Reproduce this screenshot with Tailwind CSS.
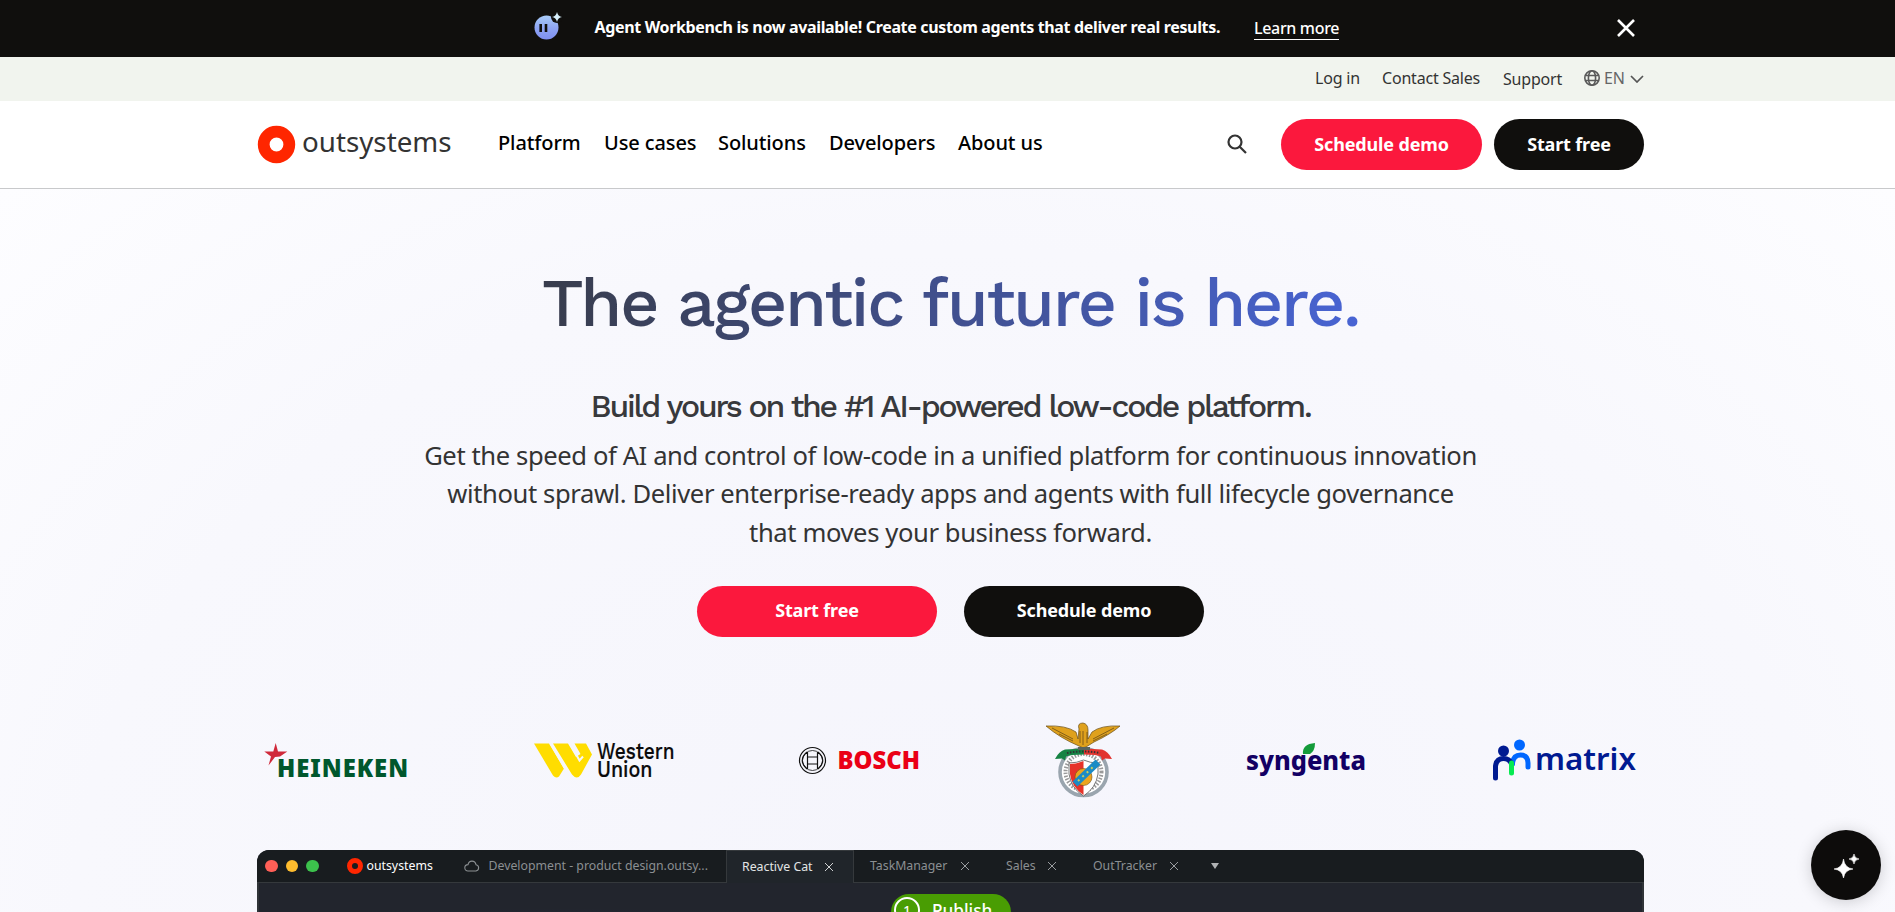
<!DOCTYPE html>
<html lang="en">
<head>
<meta charset="utf-8">
<title>OutSystems</title>
<script src="https://cdn.jsdelivr.net/npm/@tailwindcss/browser@4"></script>
</head>
<body class="h-[912px] overflow-hidden bg-[#f6f6fc] font-['Noto_Sans',sans-serif] text-[#101010]">
<div class="relative h-[912px] overflow-hidden">
  <!-- announcement -->
  <div class="flex h-[57px] items-center bg-[#100f0d] pb-[3px] pl-[533px] text-white">
    <svg class="h-8 w-8 shrink-0" viewBox="0 0 32 32"><defs><linearGradient id="bot" x1="0" y1="0" x2="0" y2="1"><stop offset="0" stop-color="#a9cdf8"/><stop offset=".5" stop-color="#8fa6f4"/><stop offset="1" stop-color="#7f8ff0"/></linearGradient></defs><circle cx="13.500" cy="16.500" r="12" fill="url(#bot)"/><circle cx="24" cy="6" r="6" fill="#100f0d"/><path d="M24 1Q25 5.300 29 6Q25 6.700 24 11Q23 6.700 19 6Q23 5.300 24 1Z" fill="#d7f0fb"/><path d="M7.700 13v8M13 13v8" stroke="#100f0d" stroke-width="2.600"/></svg>
    <p class="ml-[29.500px] w-[626.500px] whitespace-nowrap text-[16px] font-bold leading-6 tracking-[-0.34px]">Agent Workbench is now available! Create custom agents that deliver real results.</p>
    <a class="ml-[33px] mt-[2px] w-[85px] whitespace-nowrap border-b border-white text-[16px] font-medium leading-[22px] tracking-[-0.33px]">Learn more</a>
    <svg class="ml-[278px] mt-px h-[18px] w-[18px]" viewBox="0 0 18 18" fill="none" stroke="#fff" stroke-width="2.600"><path d="M1 1l16 16M17 1L1 17"/></svg>
  </div>
  <!-- utility links -->
  <div class="flex h-11 items-center bg-[#f1f4ee] pb-[2px] pl-[1315px] text-[16px] leading-5 tracking-[-0.2px] text-[#333]">
    <a class="w-[67px]">Log in</a><a class="w-[121px]">Contact Sales</a><a class="w-[81px] pt-px">Support</a>
    <svg class="h-4 w-4" viewBox="0 0 16 16" fill="none" stroke="#5a5a5a" stroke-width="1.600"><circle cx="8" cy="8" r="7.200"/><ellipse cx="8" cy="8" rx="3.600" ry="7.200"/><path d="M1.500 5.500h13M1.500 10.500h13"/></svg>
    <span class="ml-1 w-[22px] text-[#666]">EN</span>
    <svg class="ml-1 mt-[2px] h-2 w-[14px]" viewBox="0 0 14 8" fill="none" stroke="#555" stroke-width="1.700"><path d="M1 1l6 6 6-6"/></svg>
  </div>
  <!-- main navigation -->
  <header class="flex h-[88px] items-center border-b border-[#c8c9cb] bg-white pl-[257px]">
    <svg class="h-[50px] w-[197px]" viewBox="0 0 197 50"><circle cx="19.500" cy="24.500" r="12.800" fill="none" stroke="#ff2600" stroke-width="11.800"/><text x="45" y="32.300" textLength="149.500" lengthAdjust="spacingAndGlyphs" font-family="Noto Sans, sans-serif" font-size="28" fill="#333">outsystems</text></svg>
    <nav class="mb-[3px] ml-11 flex whitespace-nowrap text-[20px] font-medium leading-7 tracking-[-0.1px] text-black"><a class="w-[106px]">Platform</a><a class="w-[114px]">Use cases</a><a class="w-[111px]">Solutions</a><a class="w-[129px]">Developers</a><a class="w-[90px]">About us</a></nav>
    <svg class="-mt-[2px] ml-[179px] h-5 w-5" viewBox="0 0 20 20" fill="none" stroke="#333" stroke-width="2.200"><circle cx="8" cy="8" r="6.500"/><path d="M12.700 12.700L19 19"/></svg>
    <a class="ml-[34px] flex h-[51px] w-[201px] items-center justify-center rounded-full bg-[#fb183d] text-[18px] font-bold tracking-[-0.15px] text-white">Schedule demo</a>
    <a class="ml-3 flex h-[51px] w-[150px] items-center justify-center rounded-full bg-[#100f0d] text-[18px] font-bold tracking-[-0.15px] text-white">Start free</a>
  </header>
  <!-- hero -->
  <main class="flex h-[723px] flex-col items-center bg-[radial-gradient(ellipse_at_50%_100%,#f5f5fc_0%,#f8f8fd_65%,#fdfdff_100%)] pl-[6px] pt-[74px]">
    <h1 class="w-[820px] whitespace-nowrap bg-linear-to-r from-[#383c4c] via-[#41508f] to-[#4864d4] bg-clip-text text-center font-['Work_Sans',Inter,sans-serif] text-[68px] font-medium leading-[80px] tracking-[-2.300px] text-transparent">The agentic future is here.</h1>
    <h2 class="mt-[43px] whitespace-nowrap font-['Work_Sans',Inter,sans-serif] text-[32px] font-medium leading-10 tracking-[-2.280px] text-[#38393c]">Build yours on the #1 AI-powered low-code platform.</h2>
    <p class="mt-[11px] whitespace-nowrap text-center text-[25.600px] leading-[38.400px] tracking-[-0.4px] text-[#333]">Get the speed of AI and control of low-code in a unified platform for continuous innovation<br>without sprawl. Deliver enterprise-ready apps and agents with full lifecycle governance<br>that moves your business forward.</p>
    <div class="mt-[34px] flex gap-[27px] text-[18px] font-bold tracking-[-0.15px] text-white">
      <a class="flex h-[51px] w-[240px] items-center justify-center rounded-full bg-[#fb183d] pb-[2px]">Start free</a>
      <a class="flex h-[51px] w-[240px] items-center justify-center rounded-full bg-[#100f0d] pb-[2px]">Schedule demo</a>
    </div>
    <!-- customers -->
    <div class="mt-[83px] flex h-20 w-[1387px] shrink-0">
      <svg class="h-20 w-[160px]" viewBox="257 720 160 80"><path d="M275.700 743L278 751.500H287.300L280 756.500L275 757L268.500 765.500L271 756.500L264.300 751.500H273.300Z" fill="#d0293a"/><text x="277" y="777" textLength="132" lengthAdjust="spacingAndGlyphs" letter-spacing="1" font-family="Noto Sans, sans-serif" font-weight="900" font-size="25" fill="#00572d">HEINEKEN</text></svg>
      <svg class="ml-[107px] h-20 w-[160px]" viewBox="524 720 160 80"><path d="M534 743.500h15l15 25-5 8q-3 2.500-6-1z" fill="#ffdd00"/><path d="M553 743.500h15l8 13.500 4.500-3-6-10.500h11.500l6 11-11 20q-4 6-9 0z" fill="#ffdd00"/><path d="M550.500 743.500l15 26M570 743.500l9.500 17 3.500-4" fill="none" stroke="#f6f6fc" stroke-width="2"/><g font-family="Work Sans, Inter, sans-serif" font-weight="500" font-size="22.500" fill="#0a0a0a" stroke="#0a0a0a" stroke-width=".2"><text x="597" y="759" textLength="77.500" lengthAdjust="spacingAndGlyphs">Western</text><text x="597" y="777" textLength="55.500" lengthAdjust="spacingAndGlyphs">Union</text></g></svg>
      <svg class="ml-24 h-20 w-[160px]" viewBox="780 720 160 80"><g fill="none" stroke="#111" stroke-width="1.200"><circle cx="812.500" cy="760.500" r="13"/><path d="M807.500 752v17M817.500 752v17M807.500 757h10M807.500 764h10M807 752q-9.500 8.500 0 17M818 752q9.500 8.500 0 17"/></g><circle cx="812.500" cy="760.500" r="10" fill="none" stroke="#111" stroke-width=".8"/><text x="837.500" y="769" textLength="82.500" lengthAdjust="spacingAndGlyphs" font-family="Noto Sans, sans-serif" font-weight="900" font-size="25" fill="#ea0016">BOSCH</text></svg>
      <svg class="ml-[88px] h-20 w-[110px]" viewBox="1028 720 110 80"><circle cx="1083.500" cy="772" r="23.500" fill="#fff" stroke="#9aa5ae" stroke-width="3.600"/><circle cx="1083.500" cy="772" r="18" fill="none" stroke="#999" stroke-width="4" stroke-dasharray="1.500 1.500"/><path d="M1055 759q4-8 10-9.500l19-1v6q-14 0-18 2l-1 4-3-2z" fill="#168344"/><path d="M1112 759q-4-8-10-9.500l-18-1v6q13 0 17 2l1 4 3-2z" fill="#e2342f"/><path d="M1067 753q16-3 33 0" fill="none" stroke="#333" stroke-width="2" stroke-dasharray="1.500 1.500"/><path d="M1069 763q8 0 14.500-3q6.500 3 14.500 3v11q-2 14-14.500 22q-12.500-8-14.500-22z" fill="#fff" stroke="#555" stroke-width=".8"/><path d="M1070 764q7 0 13.500-3v34q-12-8-13.500-21z" fill="#e63329"/><circle cx="1083.500" cy="777" r="8.500" fill="#eba51f" stroke="#70501b" stroke-width=".6"/><path d="M1075 784l23-22" stroke="#1b8bc5" stroke-width="7"/><path d="M1078 781l17-16" stroke="#c9cf5d" stroke-width="2" stroke-dasharray="2 4"/><path d="M1046 726q20-1 30 6l2 7 1-10q-2-6 4-6 5 1 5 7l0 9 4-7q9-7 28-6-9 8-26 16l-8 5q-3 2-7-1-19-8-33-20z" fill="#dfa11d" stroke="#694d17" stroke-width=".7"/><path d="M1052 728l21 11M1059 734l14 7M1114 728l-21 11M1107 734l-14 7M1080 731v12M1083 731v14M1087 732v11" stroke="#694d17" stroke-width=".8"/><path d="M1078 747h12v3h-12z" fill="#59645d"/></svg>
      <svg class="ml-[98px] h-20 w-[140px]" viewBox="1236 720 140 80"><text x="1246" y="770" textLength="120" lengthAdjust="spacingAndGlyphs" font-family="Noto Sans, sans-serif" font-weight="800" font-size="27" fill="#130064">syngenta</text><path d="M1303 754q-1-10 12-11 0 8-5 11z" fill="#149b3a"/></svg>
      <svg class="ml-[108px] h-20 w-[160px]" viewBox="1484 720 160 80"><g fill="none" stroke-width="5" stroke-linecap="round"><path d="M1512.500 764v-1q1-8 8-8 7.500 0 7.500 8v4" stroke="#0067ff"/><path d="M1495.500 778v-12q1-7.500 8-7.500 6 0 8 5.500" stroke="#001a91"/><path d="M1511.500 763v10" stroke="#06ea51"/></g><circle cx="1503.500" cy="751" r="5.500" fill="#001a91"/><circle cx="1519.500" cy="745" r="5.500" fill="#0067ff"/><text x="1535" y="770" textLength="101" lengthAdjust="spacingAndGlyphs" font-family="Noto Sans, sans-serif" font-weight="600" font-size="31" fill="#001a91">matrix</text></svg>
    </div>
    <!-- IDE preview -->
    <section class="mt-[50px] h-[62px] w-[1387px] shrink-0 overflow-hidden rounded-t-[12px] bg-[#22252d] text-[12.300px] text-[#8b8f92]">
      <div class="flex h-[33px] items-stretch bg-[#181c1f] leading-[30px]">
        <div class="flex w-[469px] shrink-0 items-center border-b border-[#35393c] pl-2">
          <div class="flex gap-2"><i class="h-[12.500px] w-[12.500px] rounded-full bg-[#ff5f57]"></i><i class="h-[12.500px] w-[12.500px] rounded-full bg-[#febc2e]"></i><i class="h-[12.500px] w-[12.500px] rounded-full bg-[#3cc14c]"></i></div>
          <svg class="ml-[28px] h-4 w-4" viewBox="0 0 16 16"><circle cx="8" cy="8" r="5.500" fill="none" stroke="#ff2600" stroke-width="5"/></svg>
          <span class="ml-[4px] w-[65px] pb-px text-white">outsystems</span>
          <svg class="ml-[32px] h-3 w-4" viewBox="0 0 16 12" fill="none" stroke="#8b8f92" stroke-width="1.100"><path d="M4 11a3.200 3.200 0 0 1 0-6.400C5 0 11 0 12 4.700A3.200 3.200 0 0 1 12 11z"/></svg>
          <span class="ml-[9px] whitespace-nowrap">Development - product design.outsy...</span>
        </div>
        <div class="flex w-[128px] shrink-0 items-center border-x border-t border-[#35393c] bg-[#20252a] pl-[15px] text-[#e3e5e6]"><span class="w-[83px] whitespace-nowrap">Reactive Cat</span><svg class="h-2 w-2" viewBox="0 0 8 8" stroke="#d0d2d3"><path d="M0 0l8 8M8 0L0 8"/></svg></div>
        <div class="flex flex-1 items-center border-b border-[#35393c] pl-4"><span class="w-[91px]">TaskManager</span><svg class="h-2 w-2" viewBox="0 0 8 8" stroke="#9a9da0"><path d="M0 0l8 8M8 0L0 8"/></svg><span class="ml-[37px] w-[42px]">Sales</span><svg class="h-2 w-2" viewBox="0 0 8 8" stroke="#9a9da0"><path d="M0 0l8 8M8 0L0 8"/></svg><span class="ml-[37px] w-[77px]">OutTracker</span><svg class="h-2 w-2" viewBox="0 0 8 8" stroke="#9a9da0"><path d="M0 0l8 8M8 0L0 8"/></svg><svg class="ml-[33px] h-[6px] w-2" viewBox="0 0 8 6"><path d="M0 0h8L4 6z" fill="#b0b2b4"/></svg></div>
      </div>
      <div class="h-[40px] border-x-2 border-[#303438] bg-[radial-gradient(ellipse_at_22%_100%,#292d3c_0%,#22252d_25%)] pl-[632px] pt-[11px]">
        <div class="flex h-9 w-[120px] items-start rounded-full bg-[#499d03] pt-[3px] font-medium leading-6 text-white"><span class="ml-[3px] flex h-[26px] w-[26px] items-center justify-center rounded-full border-2 border-white text-[13px]">1</span><span class="ml-[12px] pt-[2px] text-[17.200px]">Publish</span></div>
      </div>
    </section>
  </main>
  <button class="absolute left-[1811px] top-[830px] flex h-[70px] w-[70px] items-center justify-center rounded-full bg-[#0d0c0b] shadow-[0_2px_16px_rgba(0,0,0,.18)]"><svg class="h-7 w-7" viewBox="0 0 28 28" fill="#fff"><path d="M11.500 8Q12.500 17 21 18Q12.500 19 11.500 27Q10.500 19 2 18Q10.500 17 11.500 8ZM22 3Q22.500 7.500 27 8Q22.500 8.500 22 13Q21.500 8.500 17 8Q21.500 7.500 22 3Z" stroke="#fff" stroke-width=".6"/></svg></button>
</div>
</body>
</html>
